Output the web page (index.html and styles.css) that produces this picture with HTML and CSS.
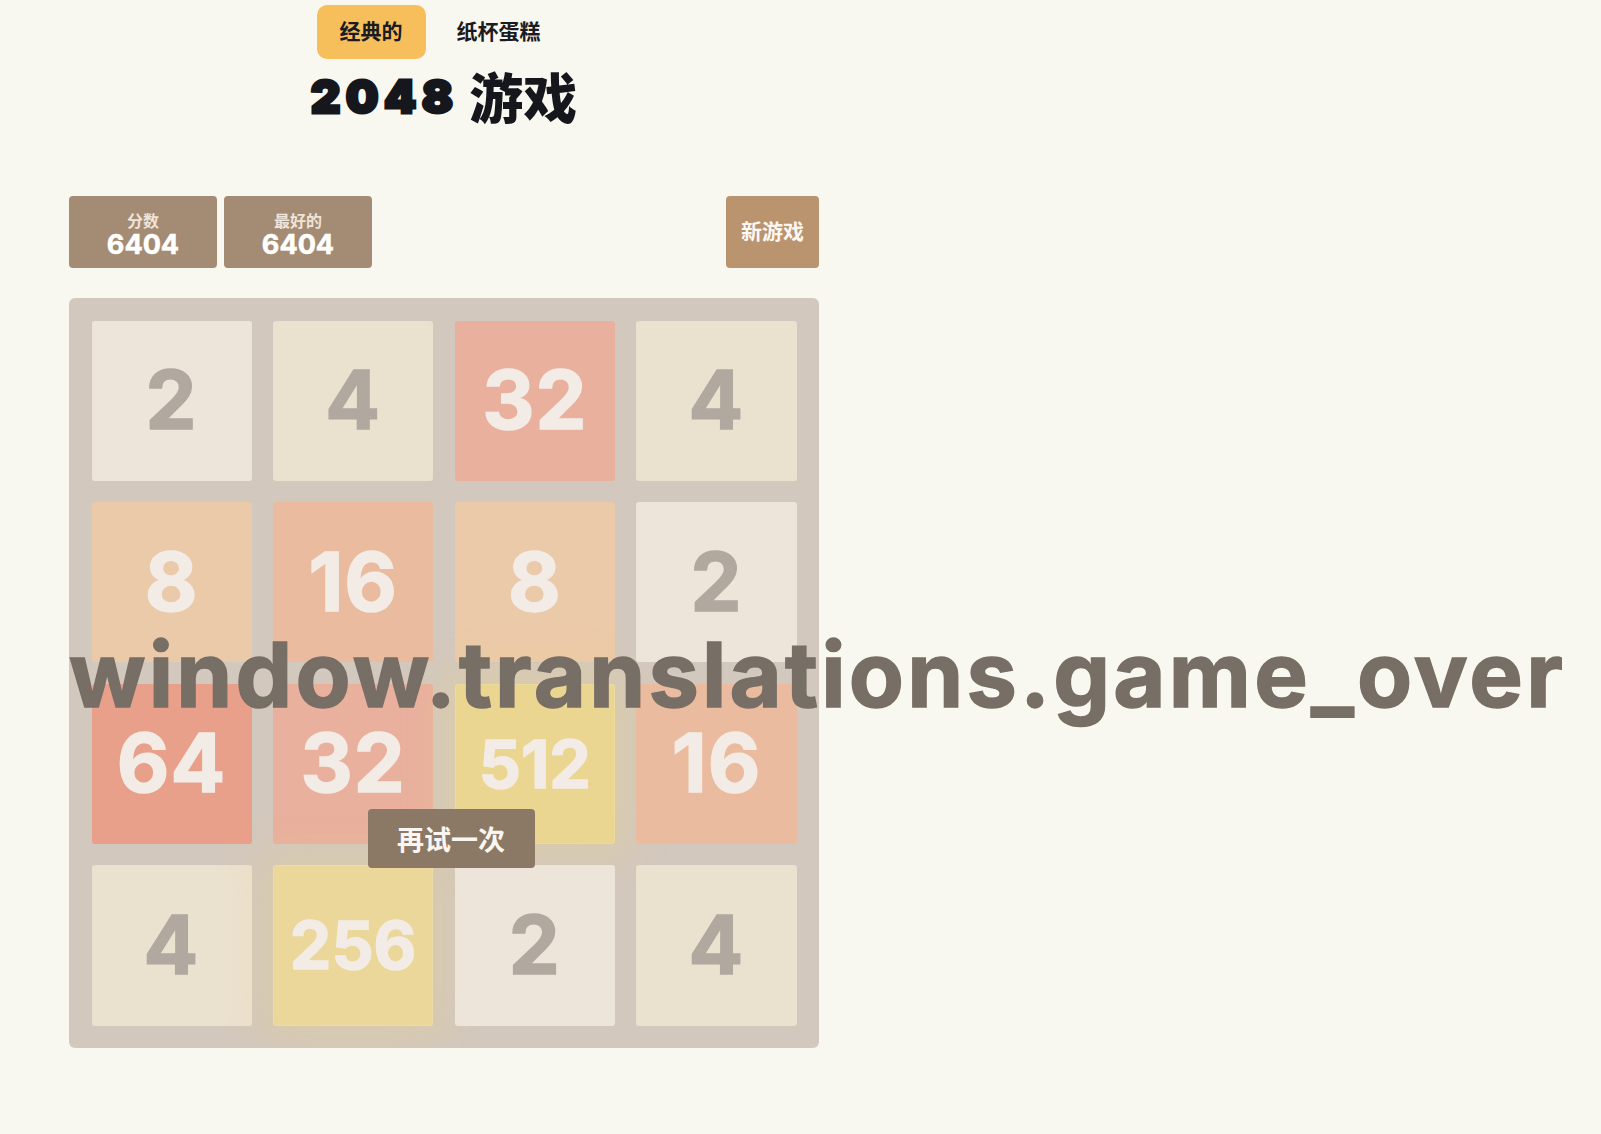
FILE: index.html
```html
<!DOCTYPE html>
<html lang="zh">
<head>
<meta charset="utf-8">
<title>2048 游戏</title>
<link rel="stylesheet" href="styles.css">
</head>
<body>
<div class="page">
  <nav class="tabs">
    <button class="tab tab-active">经典的</button>
    <button class="tab">纸杯蛋糕</button>
  </nav>
  <h1 class="title"><span class="title-num">2048</span> <span class="title-cjk">游戏</span></h1>
  <div class="toolbar">
    <div class="scores">
      <div class="score"><div class="score-label">分数</div><div class="score-value">6404</div></div>
      <div class="score"><div class="score-label">最好的</div><div class="score-value">6404</div></div>
    </div>
    <button class="new-game">新游戏</button>
  </div>
  <div class="board">
    <div class="tile t2">2</div>
    <div class="tile t4">4</div>
    <div class="tile t32">32</div>
    <div class="tile t4">4</div>
    <div class="tile t8">8</div>
    <div class="tile t16">16</div>
    <div class="tile t8">8</div>
    <div class="tile t2">2</div>
    <div class="tile t64">64</div>
    <div class="tile t32">32</div>
    <div class="tile t512 three">512</div>
    <div class="tile t16">16</div>
    <div class="tile t4">4</div>
    <div class="tile t256 three">256</div>
    <div class="tile t2">2</div>
    <div class="tile t4">4</div>
    <div class="game-over">
      <p class="game-over-text">window.translations.game_over</p>
      <button class="retry">再试一次</button>
    </div>
  </div>
</div>
</body>
</html>
```
FILE: styles.css
```css
* { box-sizing: border-box; }

body {
  margin: 0;
  background: #f9f8f0;
  font-family: Inter, "Noto Sans CJK SC", sans-serif;
}

.page {
  width: 819px;
  padding: 5px 0 0 69px;
}

.tabs {
  display: flex;
  justify-content: center;
  gap: 8px;
  margin-right: 8px;
}

.tab {
  height: 54px;
  padding: 0 23px 4px;
  border: 0;
  border-radius: 10px;
  background: transparent;
  font: 700 21px/1 "Noto Sans CJK SC", sans-serif;
  color: #1b1b22;
}

.tab-active {
  background: #f6bf5c;
}

.title {
  margin: 3px 0 0;
  text-align: center;
  font-size: 54px;
  line-height: 64px;
  font-weight: 900;
  color: #16161d;
}

.title-num {
  font-family: Inter, sans-serif;
  font-size: 46px;
  letter-spacing: 5.5px;
  -webkit-text-stroke: 3px #16161d;
}

.title-cjk {
  font-family: "Noto Sans CJK SC", sans-serif;
  vertical-align: -6px;
}

.toolbar {
  display: flex;
  justify-content: space-between;
  margin-top: 68px;
  height: 72px;
}

.scores {
  display: flex;
  gap: 7px;
}

.score {
  width: 148px;
  height: 72px;
  padding-top: 14px;
  background: #a48b73;
  border-radius: 4px;
  display: flex;
  flex-direction: column;
  align-items: center;
}

.score-label {
  font: 700 16px/20px "Noto Sans CJK SC", sans-serif;
  color: #eee4da;
}

.score-value {
  font: 700 27px/30px Inter, sans-serif;
  color: #ffffff;
  -webkit-text-stroke: 0.6px #ffffff;
}

.new-game {
  width: 93px;
  height: 72px;
  border: 0;
  border-radius: 4px;
  background: #b9946f;
  color: #fbf8f4;
  font: 700 21px/1 "Noto Sans CJK SC", sans-serif;
  padding: 0 0 4px;
}

.board {
  position: relative;
  margin-top: 30px;
  width: 750px;
  height: 750px;
  padding: 22.5px;
  background: #d3c8bd;
  border-radius: 6px;
  display: grid;
  grid-template-columns: repeat(4, 1fr);
  grid-template-rows: repeat(4, 1fr);
  gap: 21.67px;
}

.tile {
  border-radius: 3px;
  display: flex;
  align-items: center;
  justify-content: center;
  font: 700 81px/1 Inter, sans-serif;
  color: #f3ece6;
  letter-spacing: 1px;
  -webkit-text-stroke: 1.5px currentColor;
}

.tile.three {
  font-size: 66px;
  letter-spacing: 0;
}

.t2 { background: #ede5da; color: #b1a89f; }
.t4 { background: #ebe1cf; color: #b1a89f; }
.t8 { background: #ebcaa9; }
.t16 { background: #ebbba0; }
.t32 { background: #e9b09e; }
.t64 { background: #e9a08b; }
.t256 { background: #ead799; box-shadow: 0 0 40px 12px rgba(243, 215, 116, 0.24), inset 0 0 0 1px rgba(255, 255, 255, 0.12); }
.t512 { background: #ead690; box-shadow: 0 0 40px 12px rgba(243, 215, 116, 0.26), inset 0 0 0 1px rgba(255, 255, 255, 0.12); }

.game-over {
  position: absolute;
  inset: 0;
  text-align: center;
  padding-top: 332px;
}

.game-over-text {
  margin: 0;
  font: 700 90px/90px Inter, sans-serif;
  letter-spacing: 3.2px;
  color: #776e65;
  -webkit-text-stroke: 1.5px #776e65;
  white-space: nowrap;
  text-align: left;
}

.retry {
  margin: 89px 0 0 14px;
  width: 167px;
  height: 59px;
  border: 0;
  border-radius: 4px;
  background: #8b7966;
  color: #f9f6f2;
  font: 700 27px/1 "Noto Sans CJK SC", sans-serif;
  padding: 0;
}
```
